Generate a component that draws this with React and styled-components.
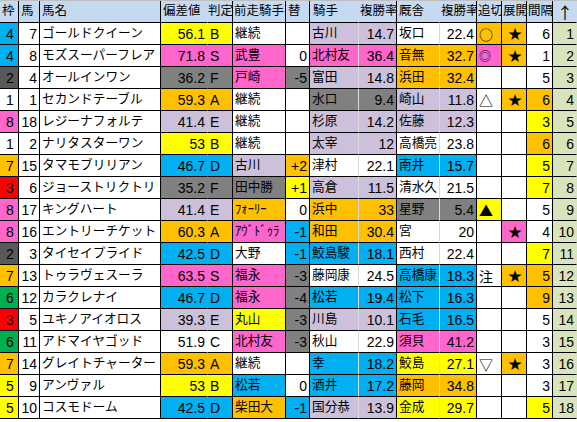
import React from "react";
import styled, { createGlobalStyle } from "styled-components";

const Global = createGlobalStyle`
  html, body { margin: 0; padding: 0; background: #ffffff; }
  body { font-family: "Liberation Sans", "Noto Sans CJK JP", sans-serif; color: #000; }
`;

const COLORS = {
  w: "#ffffff",
  b: "#00b0f0",
  p: "#ff66cc",
  y: "#ffff00",
  o: "#ffc000",
  g: "#808080",
  l: "#ccc0da",
};

const WAKU = {
  1: "#ffffff",
  2: "#595959",
  3: "#ff0000",
  4: "#00b0f0",
  5: "#ffff00",
  6: "#00b050",
  7: "#ffc000",
  8: "#ff66cc",
};

const COLS = "19px 21px 121px 47px 25px 53px 24px 49px 38px 43px 37px 25px 25px 26px 24px";

const Table = styled.div`
  width: 577px;
  display: flex;
  flex-direction: column;
`;

const HeaderRow = styled.div`
  display: grid;
  grid-template-columns: ${COLS};
  height: 23px;
  border-top: 1px solid #bfbfbf;
  box-sizing: border-box;
`;

const Row = styled.div`
  display: grid;
  grid-template-columns: ${COLS};
  height: 22px;
`;

const SEP = {
  black: "1px solid #000",
  light: "1px solid #d9d9d9",
  none: "1px solid transparent",
};

const Cell = styled.div`
  box-sizing: border-box;
  display: flex;
  align-items: center;
  justify-content: ${(p) => (p.$align === "right" ? "flex-end" : p.$align === "center" ? "center" : "flex-start")};
  padding: 0 ${(p) => (p.$align === "right" ? "2px" : "0")} 0 ${(p) => (p.$align === "right" ? "0" : "2px")};
  background: ${(p) => p.$bg || "#fff"};
  border-right: ${(p) => SEP[p.$sep || "black"]};
  border-bottom: 1px solid #000;
  font-size: ${(p) => (p.$num ? "14px" : "12.7px")};
  line-height: 1;
  white-space: nowrap;
  min-width: 0;
`;

const HeadCell = styled(Cell)`
  background: #c5d9f1;
  font-size: 12.5px;
  padding-left: ${(p) => p.$pl || "2px"};
`;

const Mark = styled.span`
  font-size: ${(p) => p.$size || "13.5px"};
  font-family: "Noto Sans CJK JP", "DejaVu Sans", sans-serif;
`;

const UpCell = styled(Cell)`
  background: #d8e4bc;
`;

const rows = [
  [4, 7, "ゴールドクイーン", "56.1", "B", "y", "継続", "w", "", "w", "古川", "l", "14.7", "坂口", "w", "22.4", "○", "o", "★", "o", "6", "w"],
  [4, 8, "モズスーパーフレア", "71.8", "S", "p", "武豊", "p", "0", "w", "北村友", "p", "36.4", "音無", "o", "32.7", "◎", "p", "★", "o", "1", "w"],
  [2, 4, "オールインワン", "36.2", "F", "g", "戸崎", "p", "-5", "g", "富田", "l", "14.8", "浜田", "o", "32.4", "", "w", "", "w", "5", "w"],
  [1, 1, "セカンドテーブル", "59.3", "A", "o", "継続", "w", "", "w", "水口", "g", "9.4", "崎山", "l", "11.8", "△", "w", "★", "o", "6", "o"],
  [8, 18, "レジーナフォルテ", "41.4", "E", "l", "継続", "w", "", "w", "杉原", "l", "14.2", "佐藤", "l", "12.3", "", "w", "", "w", "3", "y"],
  [1, 2, "ナリタスターワン", "53", "B", "y", "継続", "w", "", "w", "太宰", "l", "12", "高橋亮", "w", "23.8", "", "w", "", "w", "6", "o"],
  [7, 15, "タマモブリリアン", "46.7", "D", "b", "古川", "l", "+2", "o", "津村", "w", "22.1", "南井", "b", "15.7", "", "w", "", "w", "5", "y"],
  [3, 6, "ジョーストリクトリ", "35.2", "F", "g", "田中勝", "g", "+1", "y", "高倉", "l", "11.5", "清水久", "w", "21.5", "", "w", "", "w", "7", "y"],
  [8, 17, "キングハート", "41.4", "E", "l", "ﾌｫｰﾘｰ", "o", "0", "w", "浜中", "o", "33", "星野", "g", "5.4", "▲", "y", "", "w", "5", "w"],
  [8, 16, "エントリーチケット", "60.3", "A", "o", "ｱｳﾞﾄﾞｩﾗ", "p", "-1", "b", "和田", "o", "30.4", "宮", "w", "20", "", "w", "★", "p", "4", "w"],
  [2, 3, "タイセイプライド", "42.5", "D", "b", "大野", "w", "-1", "b", "鮫島駿", "b", "18.1", "西村", "w", "22.4", "", "w", "", "w", "7", "y"],
  [7, 13, "トゥラヴェスーラ", "63.5", "S", "p", "福永", "p", "-3", "g", "藤岡康", "w", "24.5", "高橋康", "b", "18.3", "注", "w", "★", "o", "5", "o"],
  [6, 12, "カラクレナイ", "46.7", "D", "b", "福永", "p", "-4", "g", "松若", "b", "19.4", "松下", "b", "16.3", "", "w", "", "w", "9", "o"],
  [3, 5, "ユキノアイオロス", "39.3", "E", "l", "丸山", "y", "-3", "g", "川島", "l", "10.1", "石毛", "b", "16.5", "", "w", "", "w", "5", "w"],
  [6, 11, "アドマイヤゴッド", "51.9", "C", "w", "北村友", "p", "-3", "g", "秋山", "w", "22.9", "須貝", "p", "41.2", "", "w", "", "w", "3", "w"],
  [7, 14, "グレイトチャーター", "59.3", "A", "o", "継続", "w", "", "w", "幸", "b", "18.2", "鮫島", "y", "27.1", "▽", "w", "★", "o", "3", "w"],
  [5, 9, "アンヴァル", "53", "B", "y", "松若", "b", "0", "w", "酒井", "b", "17.2", "藤岡", "o", "34.8", "", "w", "", "w", "3", "w"],
  [5, 10, "コスモドーム", "42.5", "D", "b", "柴田大", "o", "-1", "b", "国分恭", "l", "13.9", "金成", "y", "29.7", "", "w", "", "w", "5", "y"],
];

const headers = [
  ["枠", "black", "2px"],
  ["馬", "black", "2px"],
  ["馬名", "black", "2px"],
  ["偏差値", "none", "2px"],
  ["判定", "black", "0px"],
  ["前走騎手", "black", "1px"],
  ["替", "black", "2px"],
  ["騎手", "none", "3px"],
  ["複勝率", "black", "1px"],
  ["厩舎", "none", "2px"],
  ["複勝率", "black", "1px"],
  ["追切", "black", "1px"],
  ["展開", "black", "1px"],
  ["間隔", "black", "1px"],
];

export default function App() {
  return (
    <>
      <Global />
      <Table>
        <HeaderRow>
          {headers.map(([t, s, pl], i) => (
            <HeadCell key={i} $sep={s} $pl={pl}>{t}</HeadCell>
          ))}
          <HeadCell $sep="none" $pl="4px"><Mark $size="16px">↑</Mark></HeadCell>
        </HeaderRow>
        {rows.map((r, i) => {
          const [waku, num, name, dev, grade, devC, prev, prevC, ch, chC, jk, jkC, jkR, tr, trC, trR, oi, oiC, tk, tkC, iv, ivC] = r;
          return (
            <Row key={i}>
              <Cell $bg={WAKU[waku]} $align="center" $num>{waku}</Cell>
              <Cell $align="right" $num>{num}</Cell>
              <Cell>{name}</Cell>
              <Cell $bg={COLORS[devC]} $align="right" $sep="none" $num>{dev}</Cell>
              <Cell $bg={COLORS[devC]} $num>{grade}</Cell>
              <Cell $bg={COLORS[prevC]}>{prev}</Cell>
              <Cell $bg={COLORS[chC]} $align="right" $num>{ch}</Cell>
              <Cell $bg={COLORS[jkC]} $sep="light">{jk}</Cell>
              <Cell $bg={COLORS[jkC]} $align="right" $num>{jkR}</Cell>
              <Cell $bg={COLORS[trC]} $sep="light">{tr}</Cell>
              <Cell $bg={COLORS[trC]} $align="right" $num>{trR}</Cell>
              <Cell $bg={COLORS[oiC]}><Mark $size={oi === "◎" ? "12px" : "14px"}>{oi}</Mark></Cell>
              <Cell $bg={COLORS[tkC]} $align="center"><Mark>{tk}</Mark></Cell>
              <Cell $bg={COLORS[ivC]} $align="right" $num>{iv}</Cell>
              <UpCell $align="right" $sep="none" $num>{i + 1}</UpCell>
            </Row>
          );
        })}
      </Table>
    </>
  );
}
